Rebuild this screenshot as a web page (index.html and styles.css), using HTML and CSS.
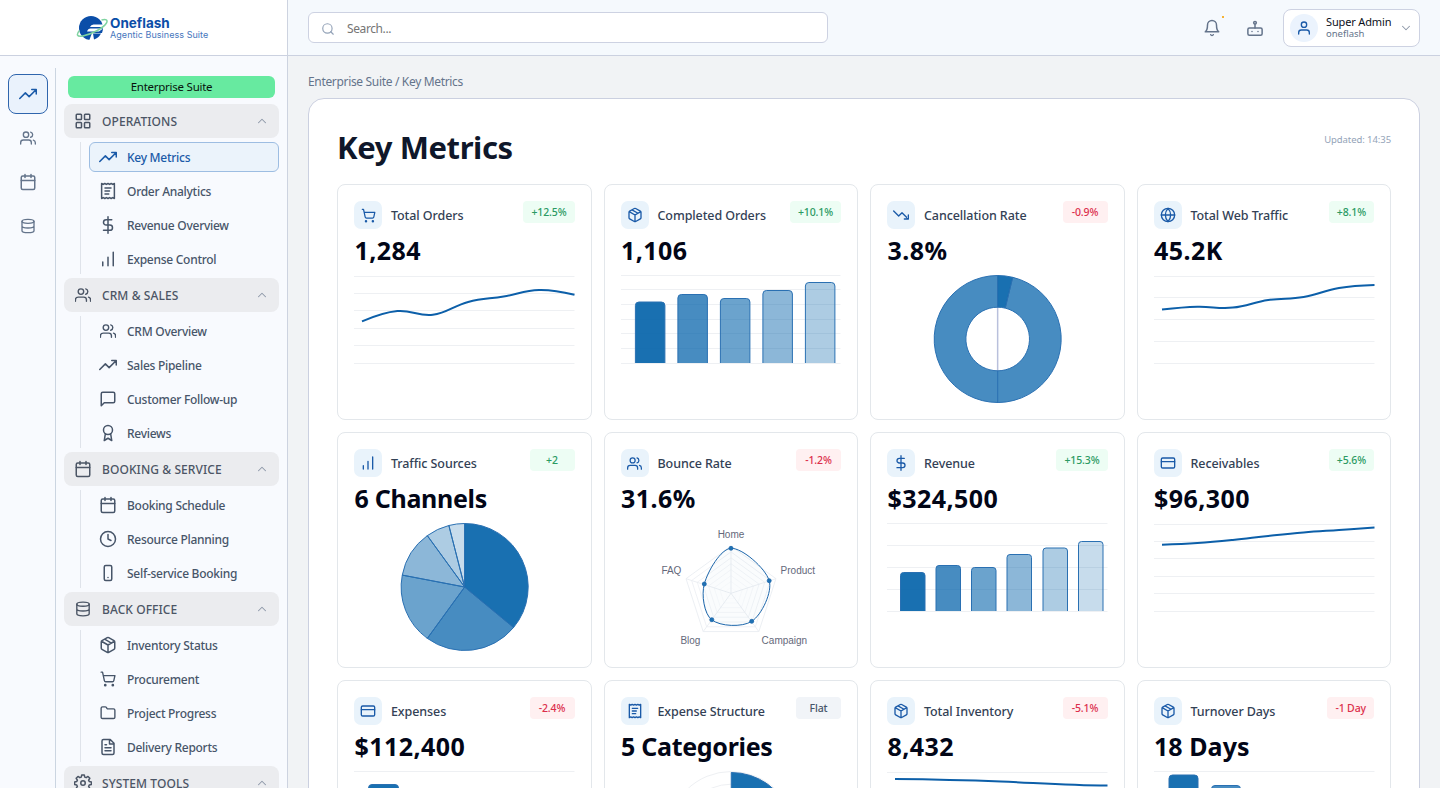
FILE: index.html
```html
<!DOCTYPE html>
<html lang="en">
<head>
<meta charset="utf-8">
<title>Key Metrics</title>
<link rel="stylesheet" href="styles.css">
</head>
<body>
<svg class="defs" width="0" height="0" aria-hidden="true">
  <symbol id="trend-up" viewBox="0 0 24 24"><path d="M23 6l-9.500 9.500-5-5L1 18M17 6h6v6"/></symbol>
  <symbol id="trend-down" viewBox="0 0 24 24"><path d="M23 18l-9.500-9.500-5 5L1 6M17 18h6v-6"/></symbol>
  <symbol id="users" viewBox="0 0 24 24"><path d="M17 21v-2a4 4 0 0 0-4-4H5a4 4 0 0 0-4 4v2M23 21v-2a4 4 0 0 0-3-3.870M16 3.130a4 4 0 0 1 0 7.750"/><circle cx="9" cy="7" r="4"/></symbol>
  <symbol id="calendar" viewBox="0 0 24 24"><path d="M8 2v4M16 2v4M3 10h18"/><rect x="3" y="4" width="18" height="18" rx="2"/></symbol>
  <symbol id="database" viewBox="0 0 24 24"><ellipse cx="12" cy="5" rx="9" ry="3"/><path d="M3 5v14a9 3 0 0 0 18 0V5M3 12a9 3 0 0 0 18 0"/></symbol>
  <symbol id="grid" viewBox="0 0 24 24"><rect x="3" y="3" width="7" height="7" rx="1"/><rect x="14" y="3" width="7" height="7" rx="1"/><rect x="14" y="14" width="7" height="7" rx="1"/><rect x="3" y="14" width="7" height="7" rx="1"/></symbol>
  <symbol id="receipt" viewBox="0 0 24 24"><path d="M3.500 2v20l2.130-1.200L7.750 22l2.130-1.200L12 22l2.130-1.200L16.250 22l2.130-1.200L20.500 22V2l-2.130 1.200L16.250 2l-2.130 1.200L12 2 9.870 3.200 7.750 2 5.630 3.200zM8 8h8M8 12h6M8 16h5"/></symbol>
  <symbol id="dollar" viewBox="0 0 24 24"><path d="M12 1v22M17 5H9.500a3.500 3.500 0 0 0 0 7h5a3.500 3.500 0 0 1 0 7H6"/></symbol>
  <symbol id="bars" viewBox="0 0 24 24"><path d="M5 21v-5M12 21V9.500M19 21V3"/></symbol>
  <symbol id="message" viewBox="0 0 24 24"><path d="M21 15a2 2 0 0 1-2 2H7l-4 4V5a2 2 0 0 1 2-2h14a2 2 0 0 1 2 2z"/></symbol>
  <symbol id="award" viewBox="0 0 24 24"><circle cx="12" cy="8" r="6"/><path d="M15.480 12.890L17 22l-5-3-5 3 1.520-9.110"/></symbol>
  <symbol id="clock" viewBox="0 0 24 24"><circle cx="12" cy="12" r="10"/><path d="M12 6v6l4 2"/></symbol>
  <symbol id="phone" viewBox="0 0 24 24"><rect x="7" y="2" width="10" height="20" rx="2"/><path d="M12 18h.01"/></symbol>
  <symbol id="box" viewBox="0 0 24 24"><path d="M11 21.730a2 2 0 0 0 2 0l7-4A2 2 0 0 0 21 16V8a2 2 0 0 0-1-1.730l-7-4a2 2 0 0 0-2 0l-7 4A2 2 0 0 0 3 8v8a2 2 0 0 0 1 1.730zM12 22V12M3.300 7L12 12l8.700-5M7.500 4.270l9 5.150"/></symbol>
  <symbol id="cart" viewBox="0 0 24 24"><circle cx="8" cy="21" r="1"/><circle cx="19" cy="21" r="1"/><path d="M2.050 2.050h2l2.660 12.420a2 2 0 0 0 2 1.580h9.780a2 2 0 0 0 1.950-1.570l1.650-7.430H5.120"/></symbol>
  <symbol id="folder" viewBox="0 0 24 24"><path d="M20 20a2 2 0 0 0 2-2V8a2 2 0 0 0-2-2h-7.900a2 2 0 0 1-1.690-.900L9.600 3.900A2 2 0 0 0 7.930 3H4a2 2 0 0 0-2 2v13a2 2 0 0 0 2 2z"/></symbol>
  <symbol id="file" viewBox="0 0 24 24"><path d="M15 2H6a2 2 0 0 0-2 2v16a2 2 0 0 0 2 2h12a2 2 0 0 0 2-2V7zM14 2v6h6M8 9h2M8 13h8M8 17h8"/></symbol>
  <symbol id="gear" viewBox="0 0 24 24"><circle cx="12" cy="12" r="3"/><path d="M10.300 2.500h3.400l.6 2.900 1.900.8 2.500-1.600 2.400 2.400-1.600 2.500.8 1.900 2.900.6v3.400l-2.900.6-.8 1.900 1.600 2.500-2.400 2.400-2.500-1.600-1.900.8-.6 2.900h-3.400l-.6-2.900-1.900-.8-2.500 1.600-2.400-2.400 1.600-2.500-.8-1.900-2.900-.6v-3.400l2.900-.6.8-1.900-1.600-2.500 2.400-2.400 2.500 1.600 1.900-.8z" transform="translate(0 -1.300)"/></symbol>
  <symbol id="chev-up" viewBox="0 0 24 24"><path d="M18 15l-6-6-6 6"/></symbol>
  <symbol id="chev-down" viewBox="0 0 24 24"><path d="M6 9l6 6 6-6"/></symbol>
  <symbol id="search" viewBox="0 0 24 24"><circle cx="11" cy="11" r="8"/><path d="M21 21l-4.300-4.300"/></symbol>
  <symbol id="bell" viewBox="0 0 24 24"><path d="M18 8A6 6 0 0 0 6 8c0 7-3 9-3 9h18s-3-2-3-9M10.300 21a1.940 1.940 0 0 0 3.400 0"/></symbol>
  <symbol id="bot" viewBox="0 0 24 24"><rect x="2.500" y="12" width="19" height="9.500" rx="2"/><circle cx="12" cy="5" r="1.800"/><path d="M12 7V12M8 16.700h.01M16 16.700h.01"/></symbol>
  <symbol id="user" viewBox="0 0 24 24"><path d="M20 21v-2a4 4 0 0 0-4-4H8a4 4 0 0 0-4 4v2"/><circle cx="12" cy="7" r="4"/></symbol>
  <symbol id="globe" viewBox="0 0 24 24"><circle cx="12" cy="12" r="10"/><path d="M2 12h20M12 2a15 15 0 0 1 4 10 15 15 0 0 1-4 10 15 15 0 0 1-4-10 15 15 0 0 1 4-10z"/></symbol>
  <symbol id="card" viewBox="0 0 24 24"><rect x="2" y="4.500" width="20" height="15" rx="2"/><path d="M2 10h20"/></symbol>
</svg>

<div class="app">
  <aside class="sidebar">
    <div class="brand">
      <svg class="brand-mark" width="32" height="28" viewBox="0 0 32 28">
        <circle cx="15" cy="14" r="12" fill="#0b4ea8"/>
        <path d="M32 10.500H17.500q-2.500 0-3.500 2.500h13zM27 14.500H14.500q-2.500 0-3.500 3h12zM28 19H16l-3 8h15z" fill="#fff"/>
        <path d="M17 19.500h8a12 12 0 0 1-7 6z" fill="#0b4ea8"/>
        <path d="M3.500 16.500C0 20.500 1 23 6 22.200 15 20.500 27 14.500 30.500 9c1.500-3-.5-4.500-5-3" fill="none" stroke="#7fd3a0" stroke-width="1.500"/>
      </svg>
      <div class="brand-text"><b class="brand-name">Oneflash</b><span class="brand-sub">Agentic Business Suite</span></div>
    </div>
    <div class="side-body">
      <nav class="rail">
        <a class="rail-btn active"><svg class="i18"><use href="#trend-up"/></svg></a>
        <a class="rail-btn"><svg class="i16"><use href="#users"/></svg></a>
        <a class="rail-btn"><svg class="i18"><use href="#calendar"/></svg></a>
        <a class="rail-btn"><svg class="i16"><use href="#database"/></svg></a>
      </nav>
      <nav class="menu">
        <div class="suite">Enterprise Suite</div>
        <div class="group"><svg class="i18"><use href="#grid"/></svg><span class="group-name">OPERATIONS</span><svg class="chev"><use href="#chev-up"/></svg></div>
        <div class="items">
          <a class="item active"><svg class="i18"><use href="#trend-up"/></svg>Key Metrics</a>
          <a class="item"><svg class="i18"><use href="#receipt"/></svg>Order Analytics</a>
          <a class="item"><svg class="i18"><use href="#dollar"/></svg>Revenue Overview</a>
          <a class="item"><svg class="i18"><use href="#bars"/></svg>Expense Control</a>
        </div>
        <div class="group"><svg class="i18 tight"><use href="#users"/></svg><span class="group-name">CRM &amp; SALES</span><svg class="chev"><use href="#chev-up"/></svg></div>
        <div class="items">
          <a class="item"><svg class="i18 tight"><use href="#users"/></svg>CRM Overview</a>
          <a class="item"><svg class="i18"><use href="#trend-up"/></svg>Sales Pipeline</a>
          <a class="item"><svg class="i18"><use href="#message"/></svg>Customer Follow-up</a>
          <a class="item"><svg class="i18"><use href="#award"/></svg>Reviews</a>
        </div>
        <div class="group"><svg class="i18"><use href="#calendar"/></svg><span class="group-name">BOOKING &amp; SERVICE</span><svg class="chev"><use href="#chev-up"/></svg></div>
        <div class="items">
          <a class="item"><svg class="i18"><use href="#calendar"/></svg>Booking Schedule</a>
          <a class="item"><svg class="i18"><use href="#clock"/></svg>Resource Planning</a>
          <a class="item"><svg class="i18"><use href="#phone"/></svg>Self-service Booking</a>
        </div>
        <div class="group"><svg class="i18 tight"><use href="#database"/></svg><span class="group-name">BACK OFFICE</span><svg class="chev"><use href="#chev-up"/></svg></div>
        <div class="items">
          <a class="item"><svg class="i18"><use href="#box"/></svg>Inventory Status</a>
          <a class="item"><svg class="i18 tight"><use href="#cart"/></svg>Procurement</a>
          <a class="item"><svg class="i18 tight"><use href="#folder"/></svg>Project Progress</a>
          <a class="item"><svg class="i18"><use href="#file"/></svg>Delivery Reports</a>
        </div>
        <div class="group"><svg class="i18"><use href="#gear"/></svg><span class="group-name">SYSTEM TOOLS</span><svg class="chev"><use href="#chev-up"/></svg></div>
      </nav>
    </div>
  </aside>

  <div class="page">
    <header class="topbar">
      <div class="search"><svg class="i14"><use href="#search"/></svg><span>Search...</span></div>
      <div class="actions">
        <span class="bell"><svg class="i18"><use href="#bell"/></svg><i class="dot"></i></span>
        <svg class="i18"><use href="#bot"/></svg>
        <div class="account">
          <span class="avatar"><svg class="i16"><use href="#user"/></svg></span>
          <div class="who"><span class="who-name">Super Admin</span><span class="who-org">oneflash</span></div>
          <svg class="chev"><use href="#chev-down"/></svg>
        </div>
      </div>
    </header>
    <main class="content">
      <div class="crumbs">Enterprise Suite / Key Metrics</div>
      <section class="panel">
        <div class="panel-head"><h1>Key Metrics</h1><span class="updated">Updated: 14:35</span></div>
        <div class="cards">

          <article class="card">
            <div class="card-head"><span class="badge-icon"><svg class="i15"><use href="#cart"/></svg></span><span class="name">Total Orders</span><span class="pill up">+12.5%</span></div>
            <div class="value">1,284</div>
            <svg class="chart" viewBox="0 0 220.500 128"><path class="gl" d="M0 1.500H220.500M0 18.500H220.500M0 35.500H220.500M0 53.500H220.500M0 70.500H220.500M0 88.500H220.500"/><path class="line" d="M8 46.300C8 46.300 29.200 37.300 43.400 36C57.600 34.700 64.600 41.600 78.800 39.800C93 38 100 30.700 114.200 27C128.400 23.300 135.400 23.900 149.600 21.500C163.800 19.100 170.800 15.400 185 15C199.200 14.600 220.500 19.700 220.500 19.700"/></svg>
          </article>

          <article class="card">
            <div class="card-head"><span class="badge-icon"><svg class="i16"><use href="#box"/></svg></span><span class="name">Completed Orders</span><span class="pill up">+10.1%</span></div>
            <div class="value">1,106</div>
            <svg class="chart" viewBox="0 0 220.500 128"><path class="gl" d="M0 .5H219.500M0 14.500H219.500M0 29.500H219.500M0 44.500H219.500M0 58.500H219.500M0 73.500H219.500M0 88.500H219.500"/>
              <g transform="translate(-.6)"><path class="bar a1" d="M15 88V30.500q0-3.500 3.500-3.500h22.500q3.500 0 3.500 3.500V88"/>
              <path class="bar a2" d="M57.500 88V23q0-3.500 3.500-3.500h22.500q3.500 0 3.500 3.500V88"/>
              <path class="bar a3" d="M100 88V27q0-3.500 3.500-3.500h22.500q3.500 0 3.500 3.500V88"/>
              <path class="bar a4" d="M142.500 88V19q0-3.500 3.500-3.500h22.500q3.500 0 3.500 3.500V88"/>
              <path class="bar a5" d="M185 88V11q0-3.500 3.500-3.500h22.500q3.500 0 3.500 3.500V88"/></g></svg>
          </article>

          <article class="card">
            <div class="card-head"><span class="badge-icon"><svg class="i16"><use href="#trend-down"/></svg></span><span class="name">Cancellation Rate</span><span class="pill down">-0.9%</span></div>
            <div class="value">3.8%</div>
            <svg class="chart" viewBox="0 0 220.500 128"><g transform="translate(.4)">
              <path class="hub" d="M110.250 32V96"/>
              <path class="slice a2" d="M125.300 2.300A63.500 63.500 0 1 1 110.250 .5V32.200A31.800 31.800 0 1 0 117.800 33.100Z"/>
              <path class="slice a1" d="M110.250 .5A63.500 63.500 0 0 1 125.300 2.300L117.800 33.100A31.800 31.800 0 0 0 110.250 32.200Z"/>
              <path class="seam" d="M110.250 96V127.500"/></g></svg>
          </article>

          <article class="card">
            <div class="card-head"><span class="badge-icon"><svg class="i16"><use href="#globe"/></svg></span><span class="name">Total Web Traffic</span><span class="pill up">+8.1%</span></div>
            <div class="value">45.2K</div>
            <svg class="chart" viewBox="0 0 220.500 128"><path class="gl" d="M0 1.500H220.500M0 22.500H220.500M0 44.500H220.500M0 66.500H220.500M0 88.500H220.500"/><path class="line" d="M8 34.500C8 34.500 29.200 32.200 43.400 31.800C57.600 31.400 64.600 34 78.800 32.600C93 31.200 100 27.100 114.200 25C128.400 22.900 135.400 24.400 149.600 22C163.800 19.600 170.800 15.400 185 13C199.200 10.600 220.500 10 220.500 10"/></svg>
          </article>

          <article class="card">
            <div class="card-head"><span class="badge-icon"><svg class="i16"><use href="#bars"/></svg></span><span class="name">Traffic Sources</span><span class="pill up">+2</span></div>
            <div class="value words">6 Channels</div>
            <svg class="chart" viewBox="0 0 220.500 128"><g transform="translate(.4)">
              <path class="slice a6" d="M110.250 64L94.460 2.490A63.500 63.500 0 0 1 110.250 .5Z"/>
              <path class="slice a5" d="M110.250 64L72.920 12.630A63.500 63.500 0 0 1 94.460 2.490Z"/>
              <path class="slice a4" d="M110.250 64L47.870 52.100A63.500 63.500 0 0 1 72.920 12.630Z"/>
              <path class="slice a3" d="M110.250 64L72.920 115.370A63.500 63.500 0 0 1 47.870 52.100Z"/>
              <path class="slice a2" d="M110.250 64L159.180 104.480A63.500 63.500 0 0 1 72.920 115.370Z"/>
              <path class="slice a1" d="M110.250 64V.5A63.500 63.500 0 0 1 159.180 104.480Z"/></g></svg>
          </article>

          <article class="card">
            <div class="card-head"><span class="badge-icon"><svg class="i15"><use href="#users"/></svg></span><span class="name">Bounce Rate</span><span class="pill down">-1.2%</span></div>
            <div class="value">31.6%</div>
            <svg class="chart" viewBox="0 0 220.500 128"><g transform="translate(-.4)">
              <g class="web" transform="translate(110.400 70.300) scale(47.300)">
                <path id="ring" d="M0-1L.951-.309L.588.809L-.588.809L-.951-.309Z"/>
                <use href="#ring" transform="scale(.875)"/><use href="#ring" transform="scale(.75)"/><use href="#ring" transform="scale(.625)"/><use href="#ring" transform="scale(.5)"/><use href="#ring" transform="scale(.375)"/><use href="#ring" transform="scale(.25)"/><use href="#ring" transform="scale(.125)"/>
                <path d="M0 0V-1M0 0L.951-.309M0 0L.588.809M0 0L-.588.809M0 0L-.951-.309"/>
              </g>
              <path class="radar" d="M110.400 25.300C121.500 24.800 144.800 45 148.600 57.700C152 68.500 141.200 92 131.100 98.300C122 104.500 99 103.500 91.200 96.700C83.500 91.400 80.700 71.500 83.700 61C87.200 48 100.300 25.800 110.400 25.300Z"/>
              <g class="knots"><circle cx="110.400" cy="25.300" r="2"/><circle cx="148.600" cy="57.700" r="2"/><circle cx="131.100" cy="98.300" r="2"/><circle cx="91.200" cy="96.700" r="2"/><circle cx="83.700" cy="61" r="2"/></g>
              <g class="axis"><text x="110.400" y="15.300" text-anchor="middle">Home</text><text x="160" y="51.300">Product</text><text x="141" y="121.300">Campaign</text><text x="59.800" y="121.300">Blog</text><text x="40.800" y="51.300">FAQ</text></g></g></svg>
          </article>

          <article class="card">
            <div class="card-head"><span class="badge-icon"><svg class="i16"><use href="#dollar"/></svg></span><span class="name">Revenue</span><span class="pill up">+15.3%</span></div>
            <div class="value">$324,500</div>
            <svg class="chart" viewBox="0 0 220.500 128"><path class="gl" d="M0 .5H220.500M0 22.500H220.500M0 44.500H220.500M0 66.500H220.500M0 88.500H220.500"/>
              <path class="bar a1" d="M13.500 88V52.500q0-3 3-3h18.500q3 0 3 3V88"/>
              <path class="bar a2" d="M49 88V45.500q0-3 3-3h18.500q3 0 3 3V88"/>
              <path class="bar a3" d="M84.500 88V47.500q0-3 3-3h18.500q3 0 3 3V88"/>
              <path class="bar a4" d="M120 88V34.500q0-3 3-3h18.500q3 0 3 3V88"/>
              <path class="bar a5" d="M156 88V28q0-3 3-3h18.500q3 0 3 3V88"/>
              <path class="bar a6" d="M191.500 88V21.500q0-3 3-3h18.500q3 0 3 3V88"/></svg>
          </article>

          <article class="card">
            <div class="card-head"><span class="badge-icon"><svg class="i16"><use href="#card"/></svg></span><span class="name">Receivables</span><span class="pill up">+5.6%</span></div>
            <div class="value">$96,300</div>
            <svg class="chart" viewBox="0 0 220.500 128"><path class="gl" d="M0 1.500H220.500M0 18.500H220.500M0 35.500H220.500M0 53.500H220.500M0 70.500H220.500M0 88.500H220.500"/><path class="line" d="M8 21.800C8 21.800 29.200 21.100 43.400 20.100C57.600 19.100 64.600 18.400 78.800 17C93 15.600 100 14.500 114.200 13C128.400 11.500 135.400 10.700 149.600 9.500C163.800 8.300 170.800 8 185 7C199.200 6 220.500 4.600 220.500 4.600"/></svg>
          </article>

          <article class="card">
            <div class="card-head"><span class="badge-icon"><svg class="i16"><use href="#card"/></svg></span><span class="name">Expenses</span><span class="pill down">-2.4%</span></div>
            <div class="value">$112,400</div>
            <svg class="chart" viewBox="0 0 220.500 128"><path class="gl" d="M0 .5H220.500M0 88.500H220.500"/>
              <path class="bar a1" d="M14.500 88V17q0-3.500 3.500-3.500h23q3.500 0 3.500 3.500V88"/>
              <path class="bar a2" d="M57.500 88V24q0-3.500 3.500-3.500h23q3.500 0 3.500 3.500V88"/></svg>
          </article>

          <article class="card">
            <div class="card-head"><span class="badge-icon"><svg class="i16"><use href="#receipt"/></svg></span><span class="name">Expense Structure</span><span class="pill flat">Flat</span></div>
            <div class="value words">5 Categories</div>
            <svg class="chart" viewBox="0 0 220.500 128">
              <circle class="gl" cx="110.250" cy="64" r="63.500"/><circle class="gl" cx="110.250" cy="64" r="50.800"/>
              <path class="slice a1" d="M110.250 64V1.500A62.500 62.500 0 0 1 169.700 44.700Z"/></svg>
          </article>

          <article class="card">
            <div class="card-head"><span class="badge-icon"><svg class="i16"><use href="#box"/></svg></span><span class="name">Total Inventory</span><span class="pill down">-5.1%</span></div>
            <div class="value">8,432</div>
            <svg class="chart" viewBox="0 0 220.500 128"><path class="gl" d="M0 1.500H220.500M0 22.500H220.500"/><path class="line" d="M8 8C40 8.300 76 9 114 10.500C150 12 180 14.500 220.500 14.600"/></svg>
          </article>

          <article class="card">
            <div class="card-head"><span class="badge-icon"><svg class="i16"><use href="#box"/></svg></span><span class="name">Turnover Days</span><span class="pill down">-1 Day</span></div>
            <div class="value mixed">18 Days</div>
            <svg class="chart" viewBox="0 0 220.500 128"><path class="gl" d="M0 .5H220.500M0 88.500H220.500"/>
              <path class="bar a1" d="M15 88V7.500q0-3.500 3.500-3.500h22q3.500 0 3.500 3.500V88"/>
              <path class="bar a2" d="M57.500 88V18q0-3.500 3.500-3.500h22q3.500 0 3.500 3.500V88"/></svg>
          </article>
        </div>
      </section>
    </main>
  </div>
</div>
</body>
</html>
```
FILE: styles.css
```css
* { box-sizing: border-box; }
body {
  margin: 0;
  height: 788px;
  overflow: hidden;
  font-family: "Noto Sans", "Open Sans", sans-serif;
  font-size: 12px;
  color: #0f172a;
  background: #f1f3f5;
}
svg { display: block; flex: none; }
.defs { position: absolute; }
.i14, .i15, .i16, .i18, .chev { fill: none; stroke: currentColor; stroke-width: 2; stroke-linecap: round; stroke-linejoin: round; }
.i14 { width: 14px; height: 14px; }
.i15 { width: 15px; height: 15px; }
.i16 { width: 16px; height: 16px; }
.i18 { width: 18px; height: 18px; }
.tight { padding: .75px; }
.chev { width: 14px; height: 14px; color: #8d97a8; stroke-width: 1.800; }

.app { display: flex; height: 788px; }
.sidebar { width: 288px; flex: none; display: flex; flex-direction: column; background: #f8fafe; border-right: 1px solid #cdd3e0; }
.brand { height: 56px; flex: none; display: flex; align-items: center; gap: 2px; padding: 1px 0 0 76px; background: #fff; border-bottom: 1px solid #cbd1e0; }
.brand-text { display: flex; flex-direction: column; font-family: Inter, sans-serif; }
.brand-name { font-size: 13.500px; line-height: 13px; color: #0b4ea8; }
.brand-sub { font-size: 9px; line-height: 10px; letter-spacing: .05px; color: #4676bd; white-space: nowrap; }
.side-body { flex: 1; min-height: 0; display: flex; padding-top: 12px; }
.rail { width: 56px; flex: none; display: flex; flex-direction: column; align-items: center; gap: 4px; padding-top: 6px; border-right: 1px solid #cbd5e1; }
.rail-btn { width: 40px; height: 40px; display: flex; align-items: center; justify-content: center; border: 1px solid transparent; border-radius: 8px; color: #64748b; }
.rail-btn.active { color: #1a5aa8; background: #eaf2fc; border-color: #2f65ad; }
.menu { flex: 1; min-width: 0; padding: 8px 8px 0; overflow: hidden; }
.suite { height: 22px; margin: 0 4px 6px; border-radius: 6px; background: #67eaa0; color: #08130d; font-size: 11.500px; letter-spacing: -.25px; line-height: 22px; text-align: center; }
.group { height: 34px; display: flex; align-items: center; padding: 0 10px; gap: 10px; border-radius: 8px; background: #ebecef; color: #4b5565; font-size: 12px; font-weight: 500; letter-spacing: .08px; }
.group-name { flex: 1; }
.items { display: flex; flex-direction: column; gap: 4px; margin: 4px 0 4px 16px; padding-left: 8px; border-left: 1px solid #dfe3ea; }
.item { height: 30px; display: flex; align-items: center; gap: 10px; padding: 0 9px; border: 1px solid transparent; border-radius: 6px; color: #475569; font-weight: 500; letter-spacing: -.27px; white-space: nowrap; }
.item.active { color: #1a5aa8; background: #ebf3fb; border-color: #9dbde2; }

.page { flex: 1; min-width: 0; display: flex; flex-direction: column; }
.topbar { height: 56px; flex: none; display: flex; align-items: center; justify-content: space-between; padding: 0 20px; background: #f5f9fd; border-bottom: 1px solid #cbd1e0; }
.search { width: 520px; height: 31px; display: flex; align-items: center; gap: 12px; padding: 2px 12px 0; border: 1px solid #cdd2e2; border-radius: 6px; background: #fff; color: #757575; letter-spacing: -.4px; }
.search svg { color: #94a3b8; }
.actions { display: flex; align-items: center; color: #64748b; }
.actions > svg { margin: 0 19px 0 25px; }
.bell { position: relative; }
.dot { position: absolute; right: -3px; top: -3px; width: 2px; height: 2px; background: #f5b335; }
.account { width: 137px; height: 38px; display: flex; align-items: center; padding: 0 6px; border: 1px solid #cdd2e2; border-radius: 8px; background: #fff; }
.avatar { width: 28px; height: 28px; display: flex; align-items: center; justify-content: center; border-radius: 50%; background: #ebf3fd; color: #1a5aa8; }
.who { flex: 1; display: flex; flex-direction: column; padding-left: 8px; }
.who-name { font-size: 11px; line-height: 13px; letter-spacing: -.15px; color: #0b0f1a; white-space: nowrap; }
.who-org { font-size: 9.500px; line-height: 12px; color: #64748b; }

.content { padding: 16px 20px 0; flex: 1; min-height: 0; overflow: hidden; }
.crumbs { height: 20px; margin-bottom: 6px; line-height: 20px; font-size: 12px; letter-spacing: -.33px; color: #64748b; }
.panel { height: 900px; padding: 28px; border: 1px solid #cbd0e0; border-radius: 16px; background: #fff; }
.panel-head { height: 57px; display: flex; justify-content: space-between; }
h1 { margin: 0; font-size: 31px; line-height: 40px; letter-spacing: -.4px; font-weight: 700; color: #0f172a; }
.updated { padding-top: 5px; font-size: 9.500px; line-height: 16px; letter-spacing: -.08px; color: #94a3b8; }
.cards { display: grid; grid-template-columns: repeat(4, minmax(0, 1fr)); gap: 12px; }
.card { height: 236px; padding: 16px; border: 1px solid #e3e7eb; border-radius: 8px; background: #fff; }
.card-head { height: 28px; display: flex; align-items: flex-start; }
.badge-icon { width: 28px; height: 28px; display: flex; align-items: center; justify-content: center; border-radius: 7px; background: #e9f3fb; color: #1a5aa8; }
.name { flex: 1; padding: 1px 0 0 9px; font-size: 12.500px; line-height: 28px; letter-spacing: -.09px; font-weight: 500; color: #334155; white-space: nowrap; }
.pill { min-width: 45px; height: 22px; padding: 0 8px; border-radius: 4px; font-size: 10.500px; line-height: 22px; letter-spacing: -.12px; text-align: center; font-weight: 500; }
.up { background: #edfdf4; color: #2b9a63; }
.down { background: #fff0f1; color: #dc2f4c; }
.flat { background: #f1f4f8; color: #475569; }
.value { height: 34px; margin: 4px 0 8px; padding-left: .5px; font-size: 25px; line-height: 34px; letter-spacing: .45px; font-weight: 700; color: #020617; white-space: nowrap; }
.value.words { letter-spacing: -.3px; }
.value.mixed { letter-spacing: .05px; }

.chart { width: 220.500px; height: 128px; overflow: visible; }
.gl { fill: none; stroke: #eef0f3; stroke-width: 1; }
.line { fill: none; stroke: #0c5fa9; stroke-width: 2; }
.bar, .slice { stroke: #2a70b2; stroke-width: 1; }
.a1 { fill: rgba(0, 96, 169, .9); }
.a2 { fill: rgba(0, 96, 169, .72); }
.a3 { fill: rgba(0, 96, 169, .58); }
.a4 { fill: rgba(0, 96, 169, .45); }
.a5 { fill: rgba(0, 96, 169, .32); }
.a6 { fill: rgba(0, 96, 169, .22); }
.hub { stroke: #b9c0dc; stroke-width: 1.500; }
.seam { stroke: #2f74b5; stroke-width: 1.200; }
.web { fill: none; stroke: #e9ecf1; stroke-width: .018; }
.radar { fill: rgba(0, 96, 169, .02); stroke: #1c66ab; stroke-width: 1; }
.knots { fill: #1f72b3; stroke: #1c66ab; stroke-width: .8; }
.axis { font-family: "Liberation Sans", Arial, sans-serif; font-size: 10px; fill: #64687a; }
```
